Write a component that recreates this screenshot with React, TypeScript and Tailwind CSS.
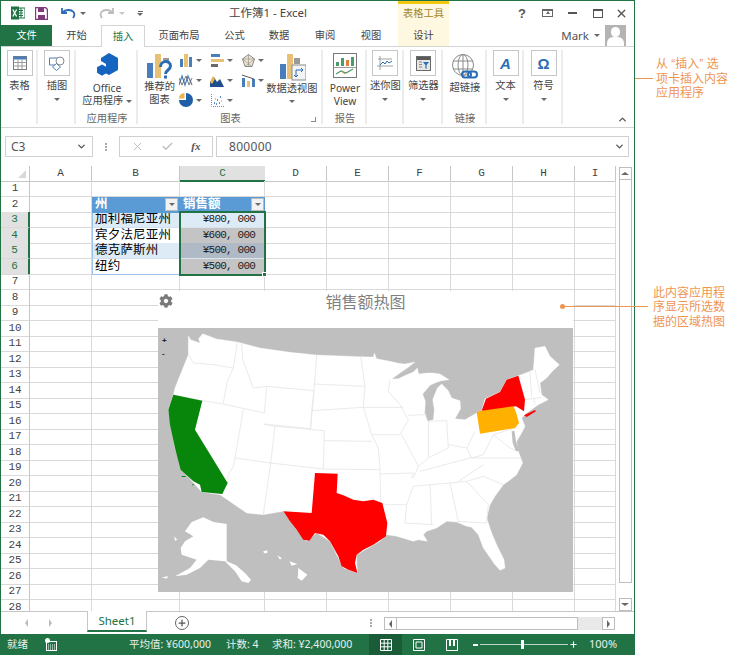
import React from 'react';
import { FaCog } from 'react-icons/fa';
import { X, Check, ChevronDown, ChevronUp, Plus } from 'lucide-react';

const Caret = ({ className = '' }: { className?: string }) => (
  <span className={`inline-block w-0 h-0 border-x-[3px] border-x-transparent border-t-[3px] border-t-[#6a6a6a] ${className}`} />
);

const ExcelLogo = () => (
  <svg width="14" height="14" viewBox="0 0 14 14">
    <rect x="6" y="2" width="8" height="10" fill="#fff" stroke="#217346" />
    <path d="M8 4.5h4M8 7h4M8 9.500h4M10 2v10" stroke="#217346" strokeWidth="1" />
    <rect x="0" y="0.500" width="8" height="13" fill="#217346" />
    <path d="M1.800 3.500l3.800 7M5.600 3.500l-3.800 7" stroke="#fff" strokeWidth="1.300" />
  </svg>
);

const SaveIcon = () => (
  <svg width="13" height="13" viewBox="0 0 13 13">
    <path d="M.5.500h10l2 2v10H.5z" fill="#fff" stroke="#80397b" strokeWidth="1.400" />
    <rect x="3" y="1" width="6" height="4" fill="#80397b" />
    <rect x="3" y="8" width="7" height="4.500" fill="#80397b" />
  </svg>
);

const UndoIcon = ({ color }: { color: string }) => (
  <svg width="15" height="12" viewBox="0 0 15 12">
    <path d="M1 1v5h5M1.500 5.500C4 2.500 10 2 12.500 5c1.500 2 1 4-.5 6" fill="none" stroke={color} strokeWidth="1.800" />
  </svg>
);

const BoxIcon = ({ children }: { children: React.ReactNode }) => (
  <div className="w-[26px] h-[26px] border border-[#c6c6c6] flex items-center justify-center">{children}</div>
);

const TableGlyph = () => (
  <svg width="14" height="14" viewBox="0 0 14 14">
    <rect x=".5" y=".5" width="13" height="13" fill="#fff" stroke="#7a7a7a" />
    <rect x=".5" y=".5" width="13" height="3" fill="#4a7ebb" />
    <path d="M.5 6.500h13M.5 10h13M5 3.500v10M9 3.500v10" stroke="#9a9a9a" />
  </svg>
);

const ShapesGlyph = () => (
  <svg width="16" height="15" viewBox="0 0 16 15">
    <path d="M6 9H.5V2H9" fill="none" stroke="#4a7ebb" />
    <circle cx="11" cy="5" r="4" fill="#fff" stroke="#8a8a8a" />
    <path d="M7.500 7.500l4 3.500-4 3.500-4-3.500z" fill="#fff" stroke="#4a7ebb" />
  </svg>
);

const OfficeApps = () => (
  <svg width="24" height="24" viewBox="0 0 24 24">
    <path d="M14 0l9 5v12l-9 5-3-1.500V11L6 8V5z" fill="#1565c0" />
    <path d="M7 11.500l5 2.800v5.500l-5 3-5-3v-5.500z" fill="#1565c0" />
  </svg>
);

const RecommendIcon = () => (
  <svg width="28" height="26" viewBox="0 0 28 26">
    <rect x="1" y="10" width="6" height="15" fill="#4a7ebb" />
    <rect x="9" y="1" width="6" height="24" fill="#e9c176" />
    <rect x="17" y="5" width="6" height="4" fill="#9a9a9a" />
    <path d="M14.500 14c0-7 10-7 10-1 0 4-5 4-5 8" fill="none" stroke="#2a6db5" strokeWidth="3" />
    <rect x="18" y="22.500" width="3" height="3" fill="#2a6db5" />
  </svg>
);

const Bars = () => (
  <svg width="13" height="13" viewBox="0 0 13 13">
    <rect x="0" y="5" width="3" height="8" fill="#4a7ebb" />
    <rect x="4" y="0" width="4" height="13" fill="#e9c176" />
    <rect x="9" y="3" width="3" height="10" fill="#4a7ebb" />
  </svg>
);

const HBars = () => (
  <svg width="13" height="13" viewBox="0 0 13 13">
    <rect x="0" y="0" width="9" height="3" fill="#4a7ebb" />
    <rect x="0" y="5" width="13" height="3" fill="#e9c176" />
    <rect x="0" y="10" width="7" height="3" fill="#6a6a6a" />
  </svg>
);

const Radar = () => (
  <svg width="13" height="13" viewBox="0 0 13 13">
    <path d="M6.500.500L12.500 5 10 12.500H3L.5 5z" fill="#f0e4cc" stroke="#8a8a8a" />
    <path d="M6.500.500v12M.5 5l12 0M3 12.500L12.500 5M10 12.500L.5 5" stroke="#8a8a8a" strokeWidth=".6" />
  </svg>
);

const LineZig = () => (
  <svg width="14" height="13" viewBox="0 0 14 13">
    <path d="M0 11l3-9 3 9 3-9 4 9" fill="none" stroke="#4a7ebb" strokeWidth="1.200" />
    <path d="M0 4l3 7 4-9 3 9 3-7" fill="none" stroke="#5a5a5a" strokeWidth=".8" />
  </svg>
);

const Area = () => (
  <svg width="14" height="13" viewBox="0 0 14 13">
    <path d="M0 13V8l4-5 3 5 3-3 4 8z" fill="#1f4e8c" />
    <path d="M0 8l3-6 2 3-3 5z" fill="#e9b44c" />
  </svg>
);

const Combo = () => (
  <svg width="13" height="13" viewBox="0 0 13 13">
    <rect x="0" y="4" width="3" height="9" fill="#4a7ebb" />
    <rect x="5" y="7" width="3" height="6" fill="#e9c176" />
    <rect x="10" y="5" width="3" height="8" fill="#4a7ebb" />
    <path d="M0 1l6 2 6 2" stroke="#5a5a5a" fill="none" />
  </svg>
);

const Pie = () => (
  <svg width="14" height="14" viewBox="0 0 14 14">
    <path d="M7 7V0a7 7 0 1 1-7 7z" fill="#1f5fa8" />
    <path d="M5.500 5.500V0A6 6 0 0 0 0 5.500z" fill="#e9b44c" />
  </svg>
);

const Scatter = () => (
  <svg width="13" height="13" viewBox="0 0 13 13">
    <path d="M.5 0v12.500H13" stroke="#8a8a8a" fill="none" strokeDasharray="1 1" />
    <path d="M3 9h1M6 6h1M9 3h1M8 9h1M5 10h1" stroke="#2a6db5" strokeWidth="1.400" />
    <path d="M4 5h1M10 7h1" stroke="#e9b44c" strokeWidth="1.400" />
  </svg>
);

const PivotIcon = () => (
  <svg width="27" height="28" viewBox="0 0 27 28">
    <rect x="1" y="11" width="6" height="15" fill="#4a7ebb" />
    <rect x="8" y="1" width="6" height="25" fill="#e9c176" />
    <rect x="15" y="5" width="6" height="6" fill="#9a9a9a" />
    <rect x="13" y="12" width="14" height="15" fill="#f4f4f4" stroke="#8a8a8a" />
    <path d="M17 17h7M17 17v7M22 15l2 2-2 2M15 22l2 2 2-2" stroke="#2a6db5" fill="none" />
  </svg>
);

const PowerViewIcon = () => (
  <svg width="24" height="25" viewBox="0 0 24 25">
    <rect x=".5" y=".5" width="23" height="24" fill="#fff" stroke="#7a7a7a" />
    <rect x="3" y="9" width="3" height="4" fill="#4d9a6a" />
    <rect x="8" y="5" width="3" height="8" fill="#4d9a6a" />
    <rect x="13" y="7" width="3" height="6" fill="#e0803a" />
    <rect x="18" y="4" width="3" height="9" fill="#4d9a6a" />
    <path d="M.5 14.500h23" stroke="#9a9a9a" />
    <path d="M3 21l5-3 5 2 7-4" stroke="#4d9a6a" fill="none" strokeWidth="1.200" />
    <path d="M8 18l4 3" stroke="#e0803a" />
  </svg>
);

const Sparkline = () => (
  <svg width="16" height="14" viewBox="0 0 16 14">
    <path d="M3 0v14M0 10h16M1 3h14" stroke="#8a8a8a" strokeWidth=".8" />
    <path d="M3 9l3-3 2 2 2-3 2 2 3-2" stroke="#2a6db5" fill="none" />
  </svg>
);

const FilterGlyph = () => (
  <svg width="15" height="15" viewBox="0 0 15 15">
    <rect x=".5" y=".5" width="14" height="14" fill="#e6e6e6" stroke="#6a6a6a" />
    <rect x="1" y="1" width="13" height="3" fill="#5a5a5a" />
    <path d="M3 6h3M3 8.500h3M3 11h3" stroke="#8a8a8a" />
    <path d="M7 6h6l-2.400 3v4l-1.200-.8V9z" fill="#2a6db5" />
  </svg>
);

const GlobeLink = () => (
  <svg width="28" height="28" viewBox="0 0 28 28">
    <circle cx="12" cy="12" r="10.500" fill="#fff" stroke="#8a8a8a" />
    <ellipse cx="12" cy="12" rx="5" ry="10.500" fill="none" stroke="#8a8a8a" />
    <path d="M2 8h20M2 16h20M12 1.500v21" stroke="#8a8a8a" />
    <rect x="11" y="18.500" width="9" height="6" rx="3" fill="none" stroke="#2a6db5" strokeWidth="2" />
    <rect x="17" y="18.500" width="9" height="6" rx="3" fill="none" stroke="#2a6db5" strokeWidth="2" />
  </svg>
);

// 菜单里的大按钮，只有图标和文字
const BoxItem = ({ label, glyph }: { label: string; glyph: React.ReactNode }) => (
  <div className="flex flex-col items-center pt-[2px]">
    <BoxIcon>{glyph}</BoxIcon>
    <span className="mt-[2px] leading-[15px]">{label}</span>
    <Caret className="mt-[5px]" />
  </div>
);

const GroupLabel = ({ children }: { children: React.ReactNode }) => (
  <span className="absolute left-0 right-0 bottom-[1px] text-center leading-[13px] text-[#666]">{children}</span>
);

const Group = ({ width, children, label, line = true }: { width: string; children: React.ReactNode; label?: string; line?: boolean }) => (
  <div className={`relative h-full flex justify-center ${width}`}>
    {children}
    {label && <GroupLabel>{label}</GroupLabel>}
    {line && <span className="absolute right-0 top-[2px] bottom-[2px] w-[2px] bg-[#ececec]" />}
  </div>
);

const SmallChart = ({ icon }: { icon: React.ReactNode }) => (
  <div className="h-[20px] flex items-center gap-[3px]">
    <span className="w-[14px] flex justify-center">{icon}</span>
    <Caret />
  </div>
);

const Ribbon = () => (
  <div className="h-[80px] pt-[1px] pb-[1px] flex text-[10.25px] text-[#444]">
    <Group width="w-[37px]"><BoxItem label="表格" glyph={<TableGlyph />} /></Group>
    <Group width="w-[38px]"><BoxItem label="插图" glyph={<ShapesGlyph />} /></Group>
    <Group width="w-[62px]" label="应用程序">
      <div className="flex flex-col items-center pt-[5px]">
        <OfficeApps />
        <span className="mt-[5px] leading-[12px]">Office</span>
        <span className="leading-[13px] whitespace-nowrap">应用程序 <Caret className="align-middle" /></span>
      </div>
    </Group>
    <Group width="w-[185px]" label="图表">
      <div className="w-full flex pl-[9px]">
        <div className="flex flex-col items-center w-[25px] pt-[5px]">
          <RecommendIcon />
          <span className="leading-[13px] mt-[1px] whitespace-nowrap">推荐的</span>
          <span className="leading-[13px]">图表</span>
        </div>
        <div className="grid grid-cols-3 grid-rows-[20px_20px_20px] gap-x-[8px] ml-[7px] pt-[2px] w-[85px] h-[62px]">
          <SmallChart icon={<Bars />} />
          <SmallChart icon={<HBars />} />
          <SmallChart icon={<Radar />} />
          <SmallChart icon={<LineZig />} />
          <SmallChart icon={<Area />} />
          <SmallChart icon={<Combo />} />
          <SmallChart icon={<Pie />} />
          <SmallChart icon={<Scatter />} />
        </div>
        <div className="flex flex-col items-center ml-[2px] pt-[5px] w-[52px]">
          <PivotIcon />
          <span className="leading-[13px] mt-[1px] whitespace-nowrap">数据透视图</span>
          <Caret className="mt-[5px]" />
        </div>
      </div>
      <span className="absolute right-[7px] bottom-[4px] w-[5px] h-[5px] border-r border-b border-[#888]" />
    </Group>
    <Group width="w-[44px]" label="报告">
      <div className="flex flex-col items-center pt-[5px]">
        <PowerViewIcon />
        <span className="mt-[4px] leading-[13px]">Power</span>
        <span className="leading-[13px]">View</span>
      </div>
    </Group>
    <Group width="w-[37px]"><BoxItem label="迷你图" glyph={<Sparkline />} /></Group>
    <Group width="w-[39px]"><BoxItem label="筛选器" glyph={<FilterGlyph />} /></Group>
    <Group width="w-[44px]" label="链接">
      <div className="flex flex-col items-center pt-[5px]">
        <GlobeLink />
        <span className="leading-[13px]">超链接</span>
      </div>
    </Group>
    <Group width="w-[37px]">
      <BoxItem label="文本" glyph={<span className="text-[15px] leading-none font-bold italic text-[#2a6db5] [font-family:'Liberation_Sans',sans-serif]">A</span>} />
    </Group>
    <Group width="w-[39px]">
      <BoxItem label="符号" glyph={<span className="text-[15px] leading-none font-bold text-[#2a6db5] [font-family:'Liberation_Sans',sans-serif]">Ω</span>} />
    </Group>
    <div className="relative flex-1">
      <ChevronUp className="absolute right-[6px] bottom-[1px] w-[11px] h-[11px] text-[#555]" strokeWidth={3} />
    </div>
  </div>
);

const TitleBar = () => (
  <div className="h-[24px] flex items-center">
    <div className="w-[228px] flex items-center pl-[10px]">
      <ExcelLogo />
      <span className="ml-[10px] flex"><SaveIcon /></span>
      <span className="ml-[13px] flex"><UndoIcon color="#2a6db5" /></span>
      <Caret className="ml-[4px]" />
      <span className="ml-[13px] flex -scale-x-100"><UndoIcon color="#bdbdbd" /></span>
      <Caret className="ml-[5px] border-t-[#c8c8c8]" />
      <span className="ml-[12px] flex flex-col items-center gap-[1px]">
        <span className="w-[5px] h-px bg-[#666]" />
        <Caret />
      </span>
    </div>
    <span className="w-[169px] text-[11.5px] text-[#444]">工作簿1 - Excel</span>
    <div className="w-[51px] h-full bg-[#fff8e1] border-t-[3px] -mt-px border-[#f2c811] text-[10.25px] text-[#a2862a] flex items-center justify-center">表格工具</div>
    <div className="flex-1 flex items-center text-[#555] pl-[66px]">
      <span className="w-[14px] text-[13px] font-bold leading-none text-center [font-family:'Liberation_Sans',sans-serif]">?</span>
      <span className="ml-[13px] w-[11px] h-[8px] border border-[#666] border-t-2 relative">
        <span className="absolute left-[3px] top-0 w-0 h-0 border-x-[2px] border-x-transparent border-b-[3px] border-b-[#666]" />
      </span>
      <span className="ml-[15px] w-[9px] h-[2px] bg-[#555]" />
      <span className="ml-[16px] w-[10px] h-[9px] border border-[#555] border-t-2" />
      <X className="ml-[12px] w-[13px] h-[13px]" strokeWidth={2.500} />
    </div>
  </div>
);

const tabs = [
  { name: '开始', w: 'w-[49px]' },
  { name: '页面布局', w: 'w-[68px]' },
  { name: '公式', w: 'w-[43px]' },
  { name: '数据', w: 'w-[46px]' },
  { name: '审阅', w: 'w-[46px]' },
  { name: '视图', w: 'w-[46px]' },
];

const TabRow = () => (
  <div className="h-[22px] flex items-stretch text-[10.25px] text-[#444] border-b border-[#d4d4d4]">
    <div className="w-[51px] h-[21px] bg-[#217346] text-white flex items-center justify-center">文件</div>
    <div className={`${tabs[0].w} flex items-center justify-center`}>{tabs[0].name}</div>
    <div className="w-[44px] h-[22px] bg-white border-x border-t border-[#d4d4d4] text-[#217346] flex items-center justify-center relative">插入</div>
    {tabs.slice(1).map((tab) => (
      <div key={tab.name} className={`${tab.w} flex items-center justify-center`}>{tab.name}</div>
    ))}
    <div className="ml-[4px] w-[51px] bg-[#fff8e1] flex items-center justify-center">设计</div>
    <div className="flex-1 flex items-center justify-end pr-[8px]">
      <span className="text-[11.5px] text-[#555]">Mark</span>
      <Caret className="ml-[5px]" />
      <div className="ml-[5px] w-[21px] h-[21px] bg-[#b4b4b4] overflow-hidden relative">
        <span className="absolute left-[6px] top-[2px] w-[9px] h-[10px] rounded-full bg-white" />
        <span className="absolute left-[2px] top-[12px] w-[17px] h-[12px] rounded-t-[6px] bg-white" />
      </div>
    </div>
  </div>
);

const FormulaBar = () => (
  <div className="h-[39px] pt-[8px] flex items-start text-[12px] text-[#555] border-t border-[#d4d4d4]">
    <div className="ml-[4px] w-[88px] h-[21px] border border-[#d0d0d0] flex items-center justify-between px-[5px]">
      <span>C3</span>
      <ChevronDown className="w-[11px] h-[11px] text-[#555]" strokeWidth={3} />
    </div>
    <div className="w-[26px] h-[21px] flex flex-col items-center justify-center gap-[1px]">
      <span className="w-[2px] h-[2px] bg-[#aaa]" />
      <span className="w-[2px] h-[2px] bg-[#aaa]" />
      <span className="w-[2px] h-[2px] bg-[#aaa]" />
    </div>
    <div className="w-[94px] h-[21px] border border-[#d0d0d0] flex items-center justify-around px-[3px] text-[#bbb]">
      <X className="w-[13px] h-[13px]" strokeWidth={1.800} />
      <Check className="w-[13px] h-[13px]" strokeWidth={2.200} />
      <span className="text-[11px] italic font-bold text-[#555] [font-family:'Liberation_Serif',serif]">fx</span>
    </div>
    <div className="ml-[3px] w-[413px] h-[21px] border border-[#d0d0d0] flex items-center justify-between pl-[12px] pr-[3px] tracking-[0.3px]">
      <span>800000</span>
      <ChevronDown className="w-[11px] h-[11px] text-[#555]" strokeWidth={3} />
    </div>
  </div>
);

const columns = ['A', 'B', 'C', 'D', 'E', 'F', 'G', 'H', 'I'];
const rowNumbers = Array.from({ length: 28 }, (_, i) => i + 1);

const tableRows: Record<number, { name: string; amount: string; nameBg: string; amountBg: string }> = {
  3: { name: '加利福尼亚州', amount: '¥800, 000', nameBg: 'bg-[#ddebf7]', amountBg: 'bg-[#ddebf7]' },
  4: { name: '宾夕法尼亚州', amount: '¥600, 000', nameBg: 'bg-white', amountBg: 'bg-[#c4c4c4]' },
  5: { name: '德克萨斯州', amount: '¥500, 000', nameBg: 'bg-[#ddebf7]', amountBg: 'bg-[#b0b9c6]' },
  6: { name: '纽约', amount: '¥500, 000', nameBg: 'bg-white', amountBg: 'bg-[#c4c4c4]' },
};

const gridCols = 'grid grid-cols-[29px_62px_88px_85px_62px_62px_62px_62px_62px_41px]';
const cellLine = 'border-r border-b border-[#d9d9d9]';

const FilterButton = () => (
  <span className="absolute right-[1px] top-[1px] w-[13px] h-[13px] bg-[#f2f2f2] border border-[#bbb] flex items-center justify-center">
    <Caret />
  </span>
);

const SheetRow = ({ row }: { row: number }) => {
  const data = tableRows[row];
  const picked = row >= 3 && row <= 6;
  return (
    <div className={`${gridCols} h-[15.5px]`}>
      <div className={`${picked ? 'bg-[#e1e1e1] text-[#217346] border-r-2 border-r-[#217346]' : 'text-[#444] border-r border-r-[#c6c6c6]'} border-b border-b-[#d9d9d9] text-[11px] leading-[15px] text-center [font-family:'Liberation_Mono',monospace]`}>{row}</div>
      <div className={cellLine} />
      {row === 2 ? (
        <>
          <div className="relative bg-[#5b9bd5] text-white font-bold text-[12.5px] leading-[14px] pl-[3px] border-r border-[#5b9bd5]">州<FilterButton /></div>
          <div className="relative bg-[#5b9bd5] text-white font-bold text-[12.5px] leading-[14px] pl-[3px]">销售额<FilterButton /></div>
        </>
      ) : data ? (
        <>
          <div className={`${data.nameBg} border-x border-[#9bc2e6] ${row === 6 ? 'border-b' : 'border-b border-b-[#cfe0f0]'} text-black text-[12.5px] leading-[14px] pl-[2px] whitespace-nowrap tracking-[0.2px]`}>{data.name}</div>
          <div className={`${data.amountBg} border-b border-[#d9e4ef] text-right pr-[10px] text-[11px] leading-[15px] tracking-[-0.8px] text-[#222] [font-family:'Liberation_Mono',monospace]`}>{data.amount}</div>
        </>
      ) : (
        <>
          <div className={cellLine} />
          <div className={cellLine} />
        </>
      )}
      {columns.slice(3).map((col) => <div key={col} className={cellLine} />)}
    </div>
  );
};

const UsMap = () => (
  <svg viewBox="24 130 1245 792" className="block w-full h-full blur-[0.4px]">
    {/* 本土轮廓 */}
    <path fill="#fff" stroke="#fff" strokeLinejoin="round" d="M115 153 122 165 130 168 150 175 146 162 158 147 200 163 262 172 330 190 420 203 500 211 630 216 670 217 673 205 680 222 720 230 745 236 765 238 795 232 775 248 750 265 725 283 745 282 760 275 790 262 802 250 806 268 830 265 850 265 870 268 897 285 875 288 860 293 840 302 818 328 826 350 824 385 833 410 850 405 853 375 848 345 862 310 875 298 895 318 905 340 930 348 932 372 915 402 945 405 980 385 995 378 1005 342 1050 322 1070 285 1105 273 1135 262 1150 255 1155 190 1185 185 1200 215 1228 240 1205 262 1190 280 1170 295 1175 330 1195 345 1165 360 1130 385 1115 400 1125 425 1115 445 1100 470 1105 500 1118 535 1100 570 1075 590 1060 600 1035 635 1020 660 1010 700 1025 745 1040 780 1062 825 1065 850 1050 857 1035 840 1000 790 985 750 965 728 950 725 920 712 890 710 860 730 830 740 820 750 832 770 805 765 790 770 765 762 740 755 710 750 690 770 620 810 622 865 580 850 540 770 500 745 470 770 440 735 400 680 340 690 290 685 210 630 155 622 100 560 75 490 55 375 70 330 75 310 95 260 115 210Z" />
    {/* 州界 */}
    <g fill="none" stroke="#e6e6e6" strokeWidth="2.500" strokeLinejoin="round">
      <path d="M115 210 130 235 190 240 250 250 262 172M250 250 232 290 220 355M70 330 157 348 220 358 343 385M275 177 278 225 295 270 310 310 350 305 343 385M280 375 255 520 250 545 235 570 233 595" />
      <path d="M350 305 492 318 482 432 340 418 375 425 362 535 255 520M362 535 340 690M375 425 523 438 520 553 362 535M500 211 492 318 485 380 482 432M492 298 645 305M632 216 645 305 640 368 485 378M523 468 665 470M640 368 665 450 685 490 690 555 520 553M690 555 692 650M690 568 790 565 785 580" />
      <path d="M640 368 760 368M720 285 715 320 750 360 775 405 750 450 665 450M755 450 805 545 790 580M775 392 830 390M835 410 835 520 805 545M835 410 890 408 895 490 835 520M895 480 950 490 975 440M810 560 960 520 1115 520M1000 540 925 590M705 660 770 660 765 715 850 720M770 660 790 605 840 600 845 720M840 600 900 595 925 710M900 595 950 590 1015 660 1010 715 920 710M950 590 1000 575 1060 600" />
      <path d="M950 490 965 520 1000 510 1030 450 1095 430M1030 450 1080 490 1105 500M1125 345 1105 273M1140 262 1145 335M1155 255 1170 325M1125 345 1175 338M1150 340 1155 360" />
    </g>
    <path fill="#bfbfbf" d="M1085 440 1093 438 1098 470 1108 498 1098 500 1088 475Z" />
    {/* 有数据的州 */}
    <path fill="#07860b" d="M70 330 157 348 135 435 233 595 217 628 155 622 150 600 130 590 92 555 75 490 60 420 55 375ZM95 574h12v3H95ZM127 598h4v4h-4Z" />
    <path fill="#ff0000" d="M495 565 563 567 560 625 580 632 610 645 640 650 670 645 697 655 712 715 708 755 670 780 640 795 620 810 615 835 622 865 595 855 575 845 565 815 540 770 520 750 495 745 478 768 460 765 440 735 420 710 400 680 485 685Z" />
    <path fill="#ff0000" d="M1105 273 1125 345 1122 380 1098 365 1005 380 995 378 1008 342 1050 322 1070 285ZM1122 392 1155 376 1158 380 1130 397Z" />
    <path fill="#ffb000" d="M980 382 995 378 1090 365 1098 382 1107 415 1095 430 990 447Z" />
    {/* 阿拉斯加和夏威夷 */}
    <path fill="#fff" d="M125 712 160 698 190 712 230 718 230 830 258 842 285 865 303 885 295 895 275 890 255 860 225 830 175 825 150 850 110 870 75 875 120 850 140 825 95 810 92 790 105 770 130 755 105 740Z" />
    <path fill="#fff" d="M445 850 472 870 455 888 443 880ZM340 800 352 797 352 805 342 806ZM382 812 395 820 390 825ZM418 830 442 838 425 843ZM35 878 55 875 50 882ZM72 755 82 765 75 768Z" />
  </svg>
);

const Chart = () => (
  <div className="absolute left-[157px] top-[125px] w-[415px] h-[301px] bg-white flex flex-col">
    <div className="h-[37px] relative flex justify-center text-[16px] leading-[22px] text-[#7f7f7f]">
      <FaCog className="absolute left-[1px] top-[3px] w-[14px] h-[14px] text-[#7a7a7a]" />
      销售额热图
    </div>
    <div className="relative flex-1 bg-[#bfbfbf] overflow-hidden">
      <UsMap />
      <span className="absolute left-[4px] top-[8px] text-[8px] leading-[10px] font-bold text-[#222] [font-family:'Liberation_Sans',sans-serif]">+</span>
      <span className="absolute left-[4px] top-[21px] text-[8px] leading-[10px] font-bold text-[#222] [font-family:'Liberation_Sans',sans-serif]">-</span>
    </div>
  </div>
);

const SheetGrid = () => (
  <div className="relative w-[615px] h-full overflow-hidden">
    <div className={`${gridCols} h-[15px] text-[11px] text-[#444] text-center leading-[14px] [font-family:'Liberation_Mono',monospace]`}>
      <div className="relative border-r border-b border-[#c6c6c6]">
        <span className="absolute right-[3px] bottom-[3px] w-0 h-0 border-l-[8px] border-l-transparent border-b-[8px] border-b-[#d8d8d8]" />
      </div>
      {columns.map((col) => (
        <div key={col} className={col === 'C' ? 'bg-[#e1e1e1] text-[#217346] border-b-2 border-[#217346]' : 'border-r border-b border-[#c6c6c6]'}>{col}</div>
      ))}
    </div>
    {rowNumbers.map((row) => <SheetRow key={row} row={row} />)}
    <div className="absolute left-[178px] top-[45px] w-[87px] h-[65px] border-2 border-[#217346] pointer-events-none">
      <span className="absolute -right-[3px] -bottom-[3px] w-[5px] h-[5px] bg-[#217346] border border-white" />
    </div>
    <Chart />
  </div>
);

const ArrowBox = ({ dir, className = '' }: { dir: 'up' | 'down' | 'left' | 'right'; className?: string }) => (
  <span className={`w-[13px] h-[13px] bg-white border border-[#bdbdbd] flex items-center justify-center shrink-0 ${className}`}>
    {dir === 'up' && <span className="w-0 h-0 border-x-[4px] border-x-transparent border-b-[3px] border-b-[#666]" />}
    {dir === 'down' && <span className="w-0 h-0 border-x-[4px] border-x-transparent border-t-[3px] border-t-[#666]" />}
    {dir === 'left' && <span className="w-0 h-0 border-y-[4px] border-y-transparent border-r-[3px] border-r-[#666]" />}
    {dir === 'right' && <span className="w-0 h-0 border-y-[4px] border-y-transparent border-l-[3px] border-l-[#666]" />}
  </span>
);

const VScroll = () => (
  <div className="flex-1 flex flex-col items-center pl-[2px] pr-[2px] pt-[1px] pb-0">
    <ArrowBox dir="up" />
    <div className="flex-1 w-[13px] flex flex-col pb-[15px]">
      <div className="flex-1 border border-[#bdbdbd] border-t-0 bg-white" />
    </div>
    <ArrowBox dir="down" />
  </div>
);

const SheetTabs = () => (
  <div className="h-[23px] flex items-start border-t border-[#c6c6c6] relative">
    <div className="w-[86px] h-full flex items-center pl-[24px] gap-[21px]">
      <span className="w-0 h-0 border-y-[4px] border-y-transparent border-r-[3px] border-r-[#bbb]" />
      <span className="w-0 h-0 border-y-[4px] border-y-transparent border-l-[3px] border-l-[#bbb]" />
    </div>
    <div className="w-[60px] h-[21px] -mt-px bg-white border-x border-[#c6c6c6] border-b-2 border-b-[#217346] text-[#217346] text-[11.5px] flex items-center justify-center">Sheet1</div>
    <span className="ml-[28px] mt-[4px] w-[14px] h-[14px] rounded-full border border-[#666] flex items-center justify-center">
      <Plus className="w-[10px] h-[10px] text-[#555]" strokeWidth={3} />
    </span>
    <div className="ml-[181px] h-full flex flex-col justify-center gap-[1px]">
      <span className="w-[2px] h-[2px] bg-[#aaa]" />
      <span className="w-[2px] h-[2px] bg-[#aaa]" />
      <span className="w-[2px] h-[2px] bg-[#aaa]" />
    </div>
    <div className="ml-[12px] mt-[5px] w-[231px] h-[13px] flex">
      <ArrowBox dir="left" />
      <div className="w-[181px] border-y border-r border-[#bdbdbd] bg-white" />
      <div className="flex-1 bg-[#e9e9e9]" />
      <ArrowBox dir="right" />
    </div>
  </div>
);

const StatusBar = () => (
  <div className="h-[21px] -mb-px bg-[#217346] text-white/90 text-[10.5px] flex items-center">
    <span className="ml-[6px] w-[38px]">就绪</span>
    <svg width="12" height="13" viewBox="0 0 12 13">
      <rect x="1.500" y="3.500" width="10" height="9" fill="none" stroke="#fff" />
      <path d="M3 7h7M3 9h7M3 11h7" stroke="#fff" strokeDasharray="1 1" />
      <circle cx="2.500" cy="2.500" r="2.500" fill="#fff" />
    </svg>
    <span className="ml-[72px] w-[97px] whitespace-nowrap">平均值: ¥600,000</span>
    <span className="w-[46px] whitespace-nowrap">计数: 4</span>
    <span className="w-[97px] whitespace-nowrap">求和: ¥2,400,000</span>
    <div className="w-[33px] h-full bg-[#1a5c37] flex items-center justify-center">
      <svg width="12" height="12" viewBox="0 0 12 12"><path d="M.5.500h11v11H.5zM.5 4.200h11M.5 7.800h11M4.200.500v11M7.800.500v11" fill="none" stroke="#fff" /></svg>
    </div>
    <div className="w-[33px] flex justify-center">
      <svg width="12" height="12" viewBox="0 0 12 12"><path d="M.5.500h11v11H.5z" fill="none" stroke="#fff" /><path d="M3 3h6v6H3z" fill="none" stroke="#fff" /></svg>
    </div>
    <div className="w-[33px] flex justify-center">
      <svg width="12" height="12" viewBox="0 0 12 12"><path d="M.5.500h11v11H.5z" fill="none" stroke="#fff" /><path d="M3 1h2v6H3zM7 1h2v6H7z" fill="#fff" /></svg>
    </div>
    <span className="ml-[5px] w-[5px] h-[2px] bg-white" />
    <div className="relative ml-[2px] w-[88px] h-[1px] bg-white/70">
      <span className="absolute left-[41px] -top-[4px] w-[3px] h-[9px] bg-white" />
    </div>
    <Plus className="ml-[1px] w-[9px] h-[9px] text-white" strokeWidth={3} />
    <span className="ml-[11px] text-[11px]">100%</span>
  </div>
);

const Notes = () => (
  <div className="w-[100px] text-[12px] leading-[14.5px] text-[#ee9552] [font-family:'Liberation_Sans','Noto_Sans_CJK_SC',sans-serif]">
    <div className="mt-[57px] pl-[21px] whitespace-nowrap">从 “插入” 选<br />项卡插入内容<br />应用程序</div>
    <div className="mt-[185px] pl-[18px] whitespace-nowrap">此内容应用程<br />序显示所选数<br />据的区域热图</div>
  </div>
);

export default function App() {
  return (
    <div className="relative flex w-[735px] h-[655px] bg-white overflow-hidden [font-family:'Noto_Sans','Noto_Sans_CJK_SC',sans-serif]">
      <div className="w-[635px] h-full border-x border-t border-[#217346] flex flex-col shrink-0">
        <TitleBar />
        <TabRow />
        <Ribbon />
        <FormulaBar />
        <div className="h-[445px] flex">
          <SheetGrid />
          <VScroll />
        </div>
        <SheetTabs />
        <StatusBar />
      </div>
      <Notes />
      {/* 标注连接线 */}
      <span className="absolute left-[635px] top-[78px] w-[18px] h-px bg-[#ee9552]" />
      <span className="absolute left-[563px] top-[306px] w-[85px] h-px bg-[#ee9552]" />
      <span className="absolute left-[560px] top-[304px] w-[5px] h-[5px] rounded-full bg-[#ee9552]" />
    </div>
  );
}
